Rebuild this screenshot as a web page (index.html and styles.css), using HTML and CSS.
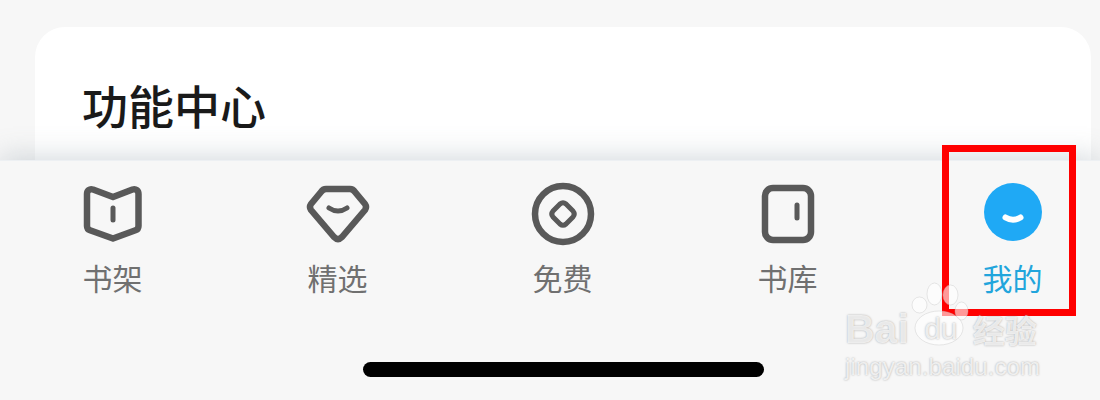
FILE: index.html
```html
<!DOCTYPE html>
<html lang="zh-CN">
<head>
<meta charset="UTF-8">
<meta name="viewport" content="width=device-width, initial-scale=1.0">
<title>功能中心</title>
<link rel="stylesheet" href="styles.css">
</head>
<body>

<div class="page">
    <!-- 功能中心卡片 -->
    <div class="card">
        <h1>功能中心</h1>
    </div>

    <!-- 底部导航 -->
    <div class="tabbar">
        <div class="tabs">
            <a class="tab">
                <svg class="tab-icon" viewBox="0 0 64 64">
                    <path d="M6 12c0-3.500 2.500-5.500 6-4.500L32 15l19.500-7.500c3.500-1 6 1 6 4.500V44c0 2-1 3.500-3 4.200L32 56.500 9 48.200c-2-.7-3-2.200-3-4.200Z"/>
                    <path class="thin" d="M32 26V38"/>
                </svg>
                <span>书架</span>
            </a>
            <a class="tab">
                <svg class="tab-icon" viewBox="0 0 64 64">
                    <path d="M20 7H44Q47 7 49 10L59 22Q61 25 59 28L36 55Q32 59 28 55L5 28Q3 25 5 22L15 10Q17 7 20 7Z"/>
                    <path class="thin" d="M23 26Q32 32 41 26"/>
                </svg>
                <span>精选</span>
            </a>
            <a class="tab">
                <svg class="tab-icon" viewBox="0 0 64 64">
                    <circle cx="32" cy="32" r="28"/>
                    <path class="thin" d="M29 22Q32 19.500 35 22L42 29Q44.500 32 42 35L35 42Q32 44.500 29 42L22 35Q19.500 32 22 29Z"/>
                </svg>
                <span>免费</span>
            </a>
            <a class="tab">
                <svg class="tab-icon" viewBox="0 0 64 64">
                    <rect x="9" y="6" width="46" height="52" rx="8"/>
                    <path class="thin" d="M41 23V36"/>
                </svg>
                <span>书库</span>
            </a>
            <a class="tab active">
                <svg class="tab-icon" viewBox="0 0 64 64">
                    <circle class="dot" cx="32" cy="30" r="29"/>
                    <path class="smile" d="M24.500 35.500Q32 40 39.500 35.500"/>
                </svg>
                <span>我的</span>
            </a>
        </div>
        <div class="home-bar"></div>
    </div>
</div>

<!-- 红框标注 -->
<div class="mark"></div>

<!-- 水印 -->
<div class="watermark">
    <svg class="paw" viewBox="0 0 70 70">
        <ellipse cx="14.500" cy="25" rx="7.500" ry="8"/>
        <ellipse cx="29.500" cy="14" rx="7.500" ry="11"/>
        <ellipse cx="45.500" cy="15" rx="7.500" ry="10"/>
        <ellipse cx="56.500" cy="31" rx="6.500" ry="9"/>
        <ellipse cx="34" cy="48" rx="24" ry="17"/>
    </svg>
    <div class="wm-logo"><b>Bai</b><i>du</i><b class="wm-cn">经验</b></div>
    <div class="wm-url">jingyan.baidu.com</div>
</div>

</body>
</html>
```
FILE: styles.css
```css
* {
    box-sizing: border-box;
}

html, body {
    margin: 0;
    height: 400px;
    overflow: hidden;
}

body {
    position: relative;
    background-color: #f7f7f7;
    font-family: "Noto Sans CJK SC", "Liberation Sans", sans-serif;
}

.page {
    display: flex;
    flex-direction: column;
    height: 400px;
    padding-top: 27px;
}

/* 功能中心卡片 */
.card {
    height: 133px;
    margin: 0 9px 0 35px;
    padding: 47px 0 0 47px;
    background-color: #fff;
    border-radius: 30px 30px 0 0;
}

.card h1 {
    margin: 0;
    font-size: 46px;
    line-height: 60px;
    font-weight: 500;
    color: #1a1a1a;
}

/* 底部导航 */
.tabbar {
    position: relative;
    flex: 1;
    padding-top: 21px;
    background-color: #f7f7f7;
    border-top: 1px solid #edf0f3;
    box-shadow: 0 -4px 26px rgba(120, 135, 150, 0.3);
}

.tabs {
    display: grid;
    grid-template-columns: repeat(5, 225px);
}

.tab {
    display: flex;
    flex-direction: column;
    align-items: center;
    font-size: 30px;
    line-height: 40px;
    color: #707070;
}

.tab span {
    margin-top: 11px;
}

.tab-icon {
    width: 64px;
    height: 64px;
    fill: none;
    stroke: #595959;
    stroke-width: 6.500;
    stroke-linejoin: round;
}

.tab-icon .thin {
    stroke-width: 5;
    stroke-linecap: round;
}

.tab.active {
    color: #22a5dc;
}

.tab-icon .dot {
    fill: #1fa9f5;
    stroke: none;
}

.tab-icon .smile {
    stroke: #fff;
    stroke-width: 6;
    stroke-linecap: round;
}

.home-bar {
    width: 401px;
    height: 15px;
    margin: 65px 0 0 363px;
    background-color: #000;
    border-radius: 8px;
}

/* 红框标注 */
.mark {
    position: absolute;
    left: 942px;
    top: 145px;
    width: 134px;
    height: 171px;
    border: 7px solid #ff0000;
}

/* 水印 */
.watermark {
    position: absolute;
    left: 845px;
    top: 282px;
    width: 200px;
    color: rgba(255, 255, 255, 0.75);
    text-shadow: 0 0 2px rgba(130, 130, 130, 0.7);
    font-family: "Liberation Sans", sans-serif;
}

.paw {
    position: absolute;
    left: 60px;
    top: -2px;
    width: 70px;
    height: 70px;
    fill: rgba(255, 255, 255, 0.6);
    stroke: rgba(190, 190, 190, 0.35);
}

.wm-logo {
    position: relative;
    display: flex;
    align-items: center;
    gap: 7px;
    margin-top: 28px;
    font-size: 41px;
    line-height: 38px;
}

.wm-logo b {
    font-weight: 700;
}

.wm-logo i {
    width: 50px;
    font-size: 30px;
    font-style: normal;
    text-align: center;
}

.wm-logo .wm-cn {
    font-family: "Noto Sans CJK SC", sans-serif;
    font-size: 32px;
}

.wm-url {
    margin-top: 4px;
    font-size: 24px;
    line-height: 30px;
    letter-spacing: 0.1px;
    white-space: nowrap;
}
```
